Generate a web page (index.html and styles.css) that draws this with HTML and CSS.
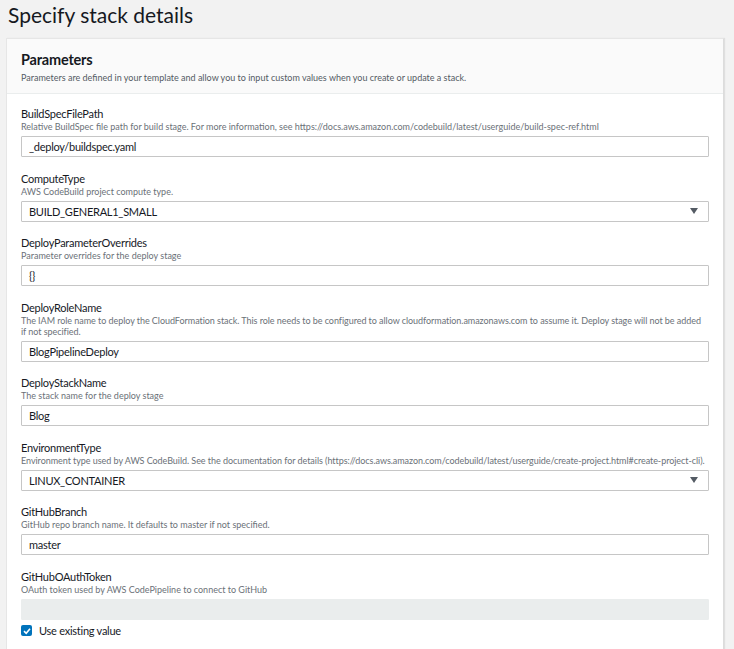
FILE: index.html
```html
<!DOCTYPE html>
<html>
<head>
<meta charset="utf-8">
<link rel="stylesheet" href="styles.css">
</head>
<body>
<h1 class="page-title">Specify stack details</h1>
<div class="card">
  <div class="card-header">
    <h2 class="card-title">Parameters</h2>
    <p class="card-desc">Parameters are defined in your template and allow you to input custom values when you create or update a stack.</p>
  </div>
  <div class="card-body">
    <div class="field">
      <div class="label">BuildSpecFilePath</div>
      <div class="desc">Relative BuildSpec file path for build stage. For more information, see https://docs.aws.amazon.com/codebuild/latest/userguide/build-spec-ref.html</div>
      <div class="input">_deploy/buildspec.yaml</div>
    </div>
    <div class="field">
      <div class="label">ComputeType</div>
      <div class="desc">AWS CodeBuild project compute type.</div>
      <div class="input select"><span>BUILD_GENERAL1_SMALL</span><span class="caret"></span></div>
    </div>
    <div class="field">
      <div class="label">DeployParameterOverrides</div>
      <div class="desc">Parameter overrides for the deploy stage</div>
      <div class="input">{}</div>
    </div>
    <div class="field">
      <div class="label">DeployRoleName</div>
      <div class="desc nowrap">The IAM role name to deploy the CloudFormation stack. This role needs to be configured to allow cloudformation.amazonaws.com to assume it. Deploy stage will not be added<br>if not specified.</div>
      <div class="input">BlogPipelineDeploy</div>
    </div>
    <div class="field">
      <div class="label">DeployStackName</div>
      <div class="desc">The stack name for the deploy stage</div>
      <div class="input">Blog</div>
    </div>
    <div class="field">
      <div class="label">EnvironmentType</div>
      <div class="desc nowrap">Environment type used by AWS CodeBuild. See the documentation for details (https://docs.aws.amazon.com/codebuild/latest/userguide/create-project.html#create-project-cli).</div>
      <div class="input select"><span>LINUX_CONTAINER</span><span class="caret"></span></div>
    </div>
    <div class="field">
      <div class="label">GitHubBranch</div>
      <div class="desc">GitHub repo branch name. It defaults to master if not specified.</div>
      <div class="input">master</div>
    </div>
    <div class="field">
      <div class="label">GitHubOAuthToken</div>
      <div class="desc">OAuth token used by AWS CodePipeline to connect to GitHub</div>
      <div class="input disabled"></div>
      <label class="check"><span class="box"><svg width="10" height="10" viewBox="0 0 10 10"><path d="M2 5.2 L4.2 7.3 L8 2.8" fill="none" stroke="#fff" stroke-width="1.6"/></svg></span>Use existing value</label>
    </div>
  </div>
</div>
</body>
</html>
```
FILE: styles.css
```css
* { box-sizing: border-box; }
body {
  margin: 0;
  background: #f2f2f2;
  font-family: Lato, "Open Sans", sans-serif;
  color: #16191f;
}
.page-title {
  margin: 0;
  padding: 1px 8px 0;
  height: 38px;
  font-size: 21px;
  font-weight: 400;
  line-height: 28px;
  color: #16191f;
}
.card {
  margin-left: 6px;
  width: 718px;
  background: #fff;
  border: 1px solid #e6e6e6;
  border-right-color: #dcdcdc;
  box-shadow: 1px 0 1px rgba(0,0,0,0.08);
}
.card-header {
  background: #fafafa;
  border-bottom: 1px solid #eaeded;
  padding: 12px 14px 0;
  height: 55px;
}
.card-title {
  margin: 0;
  font-size: 14.5px;
  font-weight: 700;
  letter-spacing: -0.2px;
  line-height: 18px;
}
.card-desc {
  margin: 2px 0 0;
  font-size: 9px;
  line-height: 13px;
  color: #545b64;
}
.card-body {
  padding: 13px 14px 10px;
}
.field {
  margin-bottom: 14.5px;
}
.label {
  font-size: 11px;
  letter-spacing: -0.25px;
  line-height: 14px;
  color: #16191f;
}
.desc {
  font-size: 9px;
  line-height: 11px;
  color: #6b7178;
}
.nowrap {
  white-space: nowrap;
  letter-spacing: -0.05px;
}
.input {
  margin-top: 4px;
  height: 21px;
  border: 1px solid #c6c6c6;
  border-radius: 1px;
  padding: 0 7px;
  font-size: 11px;
  letter-spacing: -0.25px;
  line-height: 19px;
  color: #16191f;
  background: #fff;
}
.select {
  display: flex;
  justify-content: space-between;
  align-items: center;
}
.caret {
  width: 0;
  height: 0;
  border-left: 4px solid transparent;
  border-right: 4px solid transparent;
  border-top: 6px solid #545b64;
  margin-right: 3px;
}
.disabled {
  background: #eaeded;
  border-color: #eaeded;
}
.check {
  display: flex;
  align-items: center;
  gap: 7px;
  margin-top: 4px;
  font-size: 11px;
  letter-spacing: -0.25px;
  line-height: 14px;
  color: #16191f;
}
.box {
  width: 11px;
  height: 11px;
  background: #0073bb;
  border-radius: 2px;
  display: flex;
  align-items: center;
  justify-content: center;
}
```
